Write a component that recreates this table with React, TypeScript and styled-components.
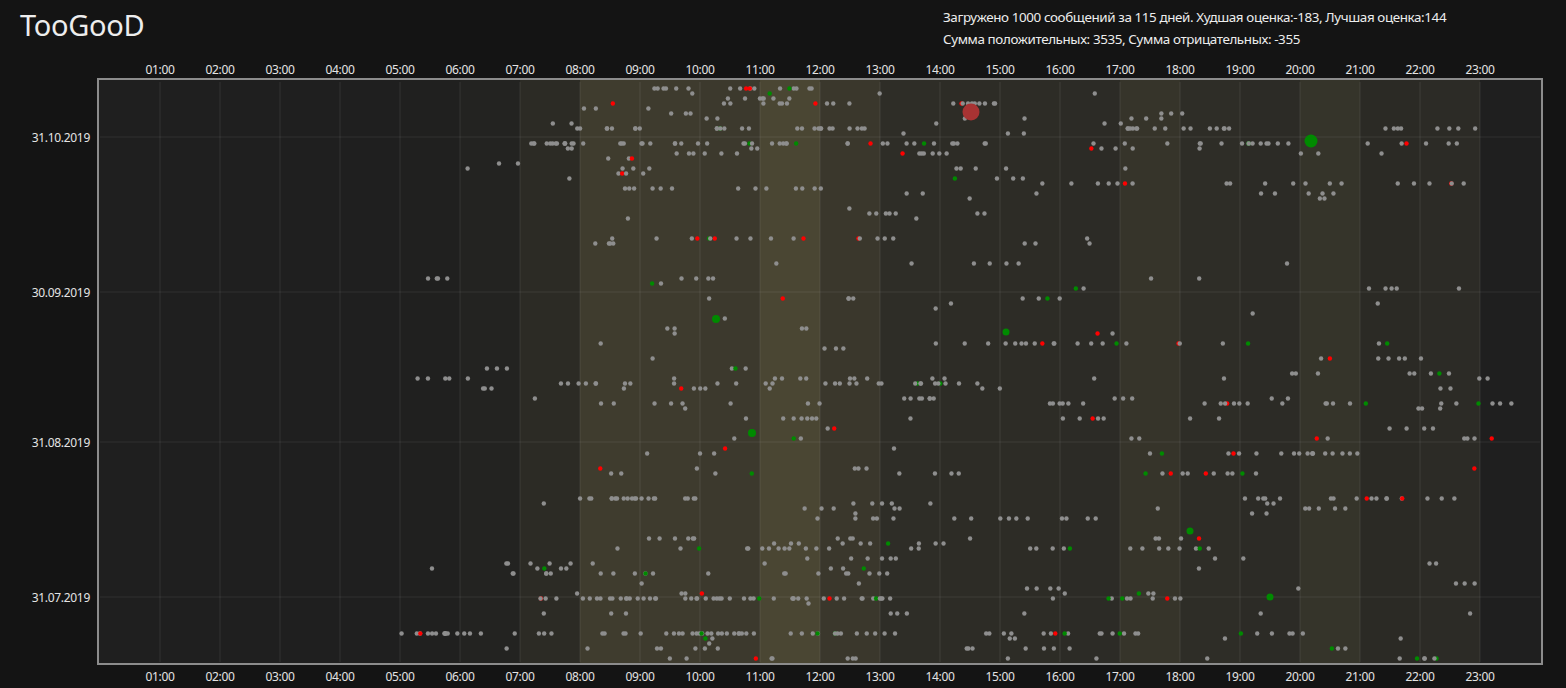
import React, { useMemo } from "react";
import styled, { createGlobalStyle } from "styled-components";

const GlobalStyle = createGlobalStyle`
  html, body {
    margin: 0;
    padding: 0;
    background: #141414;
  }
  body {
    font-family: "Noto Sans", "Open Sans", sans-serif;
    color: #ececec;
    overflow: hidden;
  }
`;

const Page = styled.div`
  width: 1566px;
  height: 688px;
  display: flex;
  flex-direction: column;
  background: #141414;
`;

const Header = styled.header`
  height: 56px;
  flex: 0 0 56px;
  display: grid;
  grid-template-columns: 923px 1fr;
  padding-left: 20px;
  box-sizing: border-box;
`;

const Title = styled.h1`
  margin: 0;
  padding-top: 10px;
  font-size: 29px;
  line-height: 29px;
  font-weight: 400;
  color: #ededed;
  letter-spacing: -0.3px;
`;

const Stats = styled.div`
  padding-top: 6px;
  font-family: "Noto Sans", sans-serif;
  font-size: 13.4px;
  letter-spacing: -0.38px;
  line-height: 22px;
  color: #ededed;
  white-space: nowrap;
`;

const ChartSvg = styled.svg`
  display: block;
  width: 1566px;
  height: 632px;
  flex: 0 0 632px;
`;

const AxisLabel = styled.text`
  font-family: "Noto Sans", "Open Sans", sans-serif;
  font-size: 12px;
  letter-spacing: -0.3px;
  fill: #e4e4e4;
  dominant-baseline: central;
`;

const X0 = 100;
const PX_PER_HOUR = 60;
const rowY = (row: number) => 88.5 + row * 5;

const GRAY = "#8e8e8e";
const RED = "#ff0000";
const GREEN = "#008a00";

const COLUMN_COLORS = [
  "#1f1f1f", "#1f1f1f", "#1f1f1f", "#1f1f1f", "#1f1f1f", "#20201f",
  "#232321", "#2c2b25", "#3f3c2e", "#3e3b2e", "#3c392d", "#4a4633",
  "#3a372c", "#2e2d27", "#2d2c26", "#2d2c26", "#2c2b26", "#36342a",
  "#2e2d27", "#2c2b26", "#35342a", "#2b2a25", "#2c2b26", "#1f1f1f",
];

const HOUR_W = [0, 0, 0, 0, 0, 0.25, 0.8, 4, 10, 10, 9, 10, 8, 6, 6, 6, 5, 7, 6, 5, 6, 5, 4, 0.3];

const DATE_TICKS = [
  { label: "31.10.2019", y: 137 },
  { label: "30.09.2019", y: 292 },
  { label: "31.08.2019", y: 442 },
  { label: "31.07.2019", y: 597 },
];

// [row, startMinute, endMinute, count]
const BURSTS: [number, number, number, number][] = [
  [11, 430, 700, 32], [11, 740, 900, 14], [11, 980, 1370, 22],
  [8, 470, 540, 8], [8, 590, 660, 7], [8, 695, 770, 12], [8, 1020, 1140, 15], [8, 1280, 1380, 8],
  [0, 545, 660, 12], [0, 680, 730, 6],
  [3, 660, 760, 8], [3, 860, 900, 5],
  [109, 290, 460, 20], [109, 500, 800, 35], [109, 880, 1050, 10],
  [102, 440, 800, 40], [102, 1020, 1060, 3],
  [114, 640, 780, 6], [114, 1280, 1340, 6],
  [82, 480, 600, 20], [82, 1140, 1360, 18],
  [59, 460, 900, 30],
  [38, 320, 355, 4],
  [60, 383, 400, 3],
  [19, 920, 1380, 20],
  [30, 500, 800, 15],
  [95, 395, 500, 6],
  [97, 400, 800, 20],
  [73, 1120, 1260, 15],
  [86, 700, 1000, 15],
  [51, 800, 1300, 18],
  [63, 1100, 1420, 15],
];

const SPECIAL: { x: number; y: number; r: number; c: string }[] = [
  { x: 716, y: 319, r: 4, c: GREEN },
  { x: 752, y: 433, r: 4, c: GREEN },
  { x: 1006, y: 332, r: 3.5, c: GREEN },
  { x: 1190, y: 531, r: 3.5, c: GREEN },
  { x: 1270, y: 597, r: 3.5, c: GREEN },
  { x: 1311, y: 141, r: 6.5, c: GREEN },
  { x: 971, y: 112, r: 8.5, c: "#a83333" },
];

type Dot = { x: number; y: number; r: number; c: string };

function mulberry32(seed: number) {
  let a = seed;
  return () => {
    a |= 0;
    a = (a + 0x6d2b79f5) | 0;
    let t = Math.imul(a ^ (a >>> 15), 1 | a);
    t = (t + Math.imul(t ^ (t >>> 7), 61 | t)) ^ t;
    return ((t ^ (t >>> 14)) >>> 0) / 4294967296;
  };
}

function pick(weights: number[], r: number) {
  const total = weights.reduce((s, w) => s + w, 0);
  let v = r * total;
  for (let i = 0; i < weights.length; i++) {
    v -= weights[i];
    if (v <= 0) return i;
  }
  return weights.length - 1;
}

function buildDots(): Dot[] {
  const rnd = mulberry32(1031);
  const dots: Dot[] = [];
  const color = () => {
    const v = rnd();
    return v < 0.05 ? RED : v < 0.1 ? GREEN : GRAY;
  };
  const add = (row: number, minute: number) => {
    if (minute < 0 || minute > 1438) return;
    dots.push({ x: X0 + minute, y: rowY(row), r: 2.2, c: color() });
  };
  for (const [row, a, b, n] of BURSTS) {
    for (let i = 0; i < n; i++) add(row, a + rnd() * (b - a));
  }
  const activity = Array.from({ length: 115 }, () => (rnd() < 0.62 ? 0.2 + rnd() : 0.02));
  while (dots.length < 993) {
    const row = pick(activity, rnd());
    const hour = pick(HOUR_W, rnd());
    let m = hour * 60 + rnd() * 60;
    const len = 1 + Math.floor(rnd() * rnd() * 6);
    for (let i = 0; i < len; i++) {
      add(row, m);
      m += 3 + rnd() * 16;
    }
  }
  return dots;
}

const hours = Array.from({ length: 23 }, (_, i) => i + 1);
const fmtHour = (h: number) => `${String(h).padStart(2, "0")}:00`;

function TimeChart() {
  const dots = useMemo(buildDots, []);
  return (
    <ChartSvg viewBox="0 56 1566 632">
      <rect x={99} y={80} width={1442} height={583} fill="#1f1f1f" />
      {COLUMN_COLORS.map((c, h) => (
        <rect key={h} x={X0 + h * PX_PER_HOUR - (h === 0 ? 1 : 0)} y={80} width={PX_PER_HOUR + (h === 0 || h === 23 ? 1 : 0)} height={583} fill={c} />
      ))}
      {hours.map((h) => (
        <line key={h} x1={X0 + h * PX_PER_HOUR} x2={X0 + h * PX_PER_HOUR} y1={82} y2={662} stroke="rgba(255,255,255,0.055)" strokeWidth={1.6} />
      ))}
      {DATE_TICKS.map((t) => (
        <line key={t.label} x1={100} x2={1540} y1={t.y} y2={t.y} stroke="rgba(255,255,255,0.055)" strokeWidth={1.6} />
      ))}
      {dots.map((d, i) => (
        <circle key={i} cx={d.x} cy={d.y} r={d.r} fill={d.c} />
      ))}
      {SPECIAL.map((d, i) => (
        <circle key={`s${i}`} cx={d.x} cy={d.y} r={d.r} fill={d.c} />
      ))}
      <rect x={98} y={79} width={1444} height={585} fill="none" stroke="#8c8c8c" strokeWidth={2} />
      {hours.map((h) => (
        <AxisLabel key={`t${h}`} x={X0 + h * PX_PER_HOUR} y={69} textAnchor="middle">
          {fmtHour(h)}
        </AxisLabel>
      ))}
      {hours.map((h) => (
        <AxisLabel key={`b${h}`} x={X0 + h * PX_PER_HOUR} y={676} textAnchor="middle">
          {fmtHour(h)}
        </AxisLabel>
      ))}
      {DATE_TICKS.map((t) => (
        <AxisLabel key={`y${t.label}`} x={90} y={t.y} textAnchor="end">
          {t.label}
        </AxisLabel>
      ))}
    </ChartSvg>
  );
}

export default function App() {
  return (
    <>
      <GlobalStyle />
      <Page>
        <Header>
          <Title>TooGooD</Title>
          <Stats>
            <div>Загружено 1000 сообщений за 115 дней. Худшая оценка:-183, Лучшая оценка:144</div>
            <div>Сумма положительных: 3535, Сумма отрицательных: -355</div>
          </Stats>
        </Header>
        <TimeChart />
      </Page>
    </>
  );
}
